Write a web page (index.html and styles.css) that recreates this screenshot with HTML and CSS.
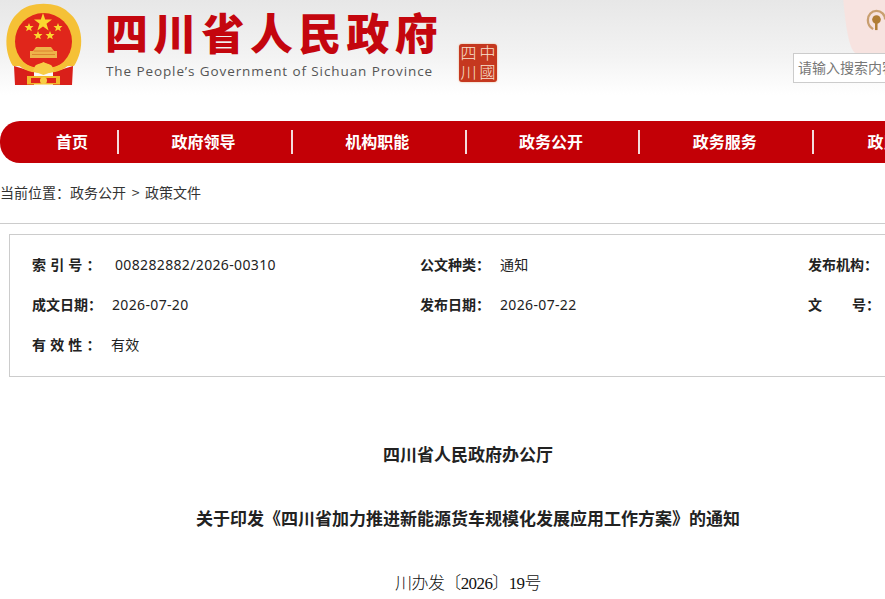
FILE: index.html
```html
<!DOCTYPE html>
<html lang="zh-CN">
    <head>
        <meta charset="utf-8">
        <title>四川省人民政府办公厅</title>
        <link rel="stylesheet" href="styles.css">
    </head>
    <body>
        <div class="page">
            <header class="top">
                <svg class="emblem" viewBox="0 0 90 90" aria-hidden="true">
                    <path d="M13 66C3 50 4 24 19 12C29 1 58 1 68 12C84 24 85 50 74 66Z" fill="#f5c136"/>
                    <circle cx="43.500" cy="41.500" r="28.500" fill="#e0261b"/>
                    <polygon points="43,13 45.200,19.600 52,19.600 46.500,23.700 48.600,30.500 43,26.400 37.400,30.500 39.500,23.700 34,19.600 40.800,19.600" fill="#fbd72f"/>
                    <polygon points="29,23 30.200,25.900 33.500,26.100 31,28.200 31.800,31.300 29,29.600 26.200,31.300 27,28.200 24.500,26.100 27.800,25.900" fill="#fbd72f"/>
                    <polygon points="58,23 59.200,25.900 62.500,26.100 60,28.200 60.800,31.300 58,29.600 55.200,31.300 56,28.200 53.500,26.100 56.800,25.900" fill="#fbd72f"/>
                    <polygon points="38,31 39.200,33.900 42.500,34.100 40,36.200 40.800,39.300 38,37.600 35.200,39.300 36,36.200 33.500,34.100 36.800,33.900" fill="#fbd72f"/>
                    <polygon points="50,31 51.200,33.900 54.500,34.100 52,36.200 52.800,39.300 50,37.600 47.200,39.300 48,36.200 45.500,34.100 48.800,33.900" fill="#fbd72f"/>
                    <path d="M36 47H51L54 51H57V58H30V51H33Z" fill="#eeb24a"/>
                    <path d="M34 51H53M32 54.500H55" stroke="#d8782a" stroke-width=".8"/>
                    <path d="M14 66L34 72V85H15ZM73 66L53 72V85H72Z" fill="#d91f1a"/>
                    <path d="M18 57C24 65 33 68 43.500 68C54 68 63 65 69 57L72 62C64 71 54 73 43.500 73C33 73 23 71 15 62Z" fill="#f5bf35"/>
                    <path d="M35 66C38 63 41 64 43.500 62C46 64 49 63 52 66L54 71L43.500 75L33 71Z" fill="#f7cd46"/>
                    <path d="M27 76H60V84.500H27Z" fill="#f2b92c"/>
                    <path d="M31 78H56V83H31Z" fill="#e0261b"/>
                    <circle cx="43.500" cy="80.500" r="3.500" fill="#f7cd46"/>
                </svg>
                <div class="site-name">
                    <div class="site-name-cn">四川省人民政府</div>
                    <div class="site-name-en">The People’s Government of Sichuan Province</div>
                </div>
                <div class="seal">
                    <span>四</span><span>中</span><span>川</span><span>國</span>
                </div>
                <div class="top-side">
                    <svg class="pin" viewBox="0 0 20 24" aria-hidden="true">
                        <path d="M7 21C3.500 19 1.500 15.500 1.500 11.500C1.500 6 5.500 2 10.500 2C15.500 2 19.500 6 19.500 11" fill="none" stroke="#c99f70" stroke-width="2.400"/>
                        <circle cx="10.500" cy="11" r="4.500" fill="#b07d35"/>
                        <rect x="9" y="12" width="2.600" height="10" fill="#b07d35"/>
                    </svg>
                    <input class="search" type="text" placeholder="请输入搜索内容">
                </div>
            </header>

            <nav class="nav">
                <a class="nav-item nav-item-first">首页</a>
                <a class="nav-item">政府领导</a>
                <a class="nav-item">机构职能</a>
                <a class="nav-item">政务公开</a>
                <a class="nav-item">政务服务</a>
                <a class="nav-item">政民互动</a>
            </nav>

            <div class="crumb">当前位置：政务公开 &gt; 政策文件</div>

            <section class="info">
                <div class="info-cell"><b class="info-label info-label-wide">索 引 号 ：</b><span class="info-value info-value-index">008282882/2026-00310</span></div>
                <div class="info-cell"><b class="info-label">公文种类：</b><span class="info-value">通知</span></div>
                <div class="info-cell"><b class="info-label">发布机构：</b></div>
                <div class="info-cell"><b class="info-label">成文日期：</b><span class="info-value">2026-07-20</span></div>
                <div class="info-cell"><b class="info-label">发布日期：</b><span class="info-value">2026-07-22</span></div>
                <div class="info-cell"><b class="info-label info-label-split"><i>文</i><i>号：</i></b></div>
                <div class="info-cell"><b class="info-label info-label-wide">有 效 性 ：</b><span class="info-value info-value-short">有效</span></div>
            </section>

            <article class="doc">
                <h2 class="doc-line doc-title">四川省人民政府办公厅</h2>
                <h1 class="doc-line doc-title">关于印发《四川省加力推进新能源货车规模化发展应用工作方案》的通知</h1>
                <p class="doc-line doc-number">川办发〔2026〕19号</p>
            </article>
        </div>
    </body>
</html>
```

FILE: styles.css
```css
html, body {
    margin: 0;
    height: 599px;
    overflow: hidden;
    background: #fff;
}
body {
    font-family: "Noto Sans CJK SC", "Noto Sans", sans-serif;
    color: #222;
}
.page {
    width: 1100px;
}

/* header */
.top {
    position: relative;
    display: flex;
    height: 95px;
    margin-bottom: 26px;
    background: linear-gradient(#e7e7e7, #f3f3f3 60%, #fff);
}
.emblem {
    width: 90px;
    height: 90px;
    flex: none;
}
.site-name {
    margin-left: 15px;
    padding-top: 10px;
    width: 345px;
    flex: none;
}
.site-name-cn {
    height: 50px;
    font-family: "Liberation Sans", "Noto Sans CJK SC", sans-serif;
    font-size: 43px;
    line-height: 50px;
    font-weight: 900;
    letter-spacing: 5.300px;
    color: #c4060e;
    white-space: nowrap;
}
.site-name-en {
    margin-top: 1px;
    padding-left: 1px;
    font-family: "Open Sans", sans-serif;
    font-size: 13.500px;
    line-height: 20px;
    letter-spacing: .9px;
    color: #555;
    white-space: nowrap;
}
.seal {
    display: grid;
    grid-template-columns: 19px 19px;
    grid-template-rows: 19px 19px;
    align-self: flex-start;
    margin-top: 44px;
    margin-left: 9px;
    flex: none;
    background: #c5381f;
    border-radius: 3px;
    box-shadow: 0 0 2px #e9a77c;
    font-family: "Liberation Sans", "Noto Sans CJK SC", sans-serif;
    font-size: 16px;
    font-weight: 300;
    line-height: 19px;
    text-align: center;
    color: #f9e2cf;
}
.top-side {
    margin-left: 296px;
    width: 300px;
    flex: none;
}
.top-side:before {
    content: "";
    position: absolute;
    left: 841px;
    top: -60px;
    width: 200px;
    height: 113px;
    border-bottom-left-radius: 15px 113px;
    background: #f7e3e0;
}
.pin {
    position: absolute;
    left: 866px;
    top: 9px;
    width: 20px;
    height: 23px;
}
.search {
    position: relative;
    display: block;
    box-sizing: border-box;
    margin-top: 53px;
    width: 200px;
    height: 30px;
    padding: 0 4px 2px;
    border: 1px solid #ccc;
    background: #fff;
    font-family: inherit;
    font-size: 14px;
}
.search::placeholder {
    color: #777;
    opacity: 1;
}

/* nav */
.nav {
    display: flex;
    align-items: center;
    height: 42px;
    background: #c30006;
    border-radius: 20px 0 0 20px;
}
.nav-item {
    width: 173.800px;
    height: 24px;
    padding-right: 3px;
    flex: none;
    border-right: 2px solid #f3dcdc;
    box-sizing: border-box;
    font-size: 16px;
    font-weight: 700;
    line-height: 22px;
    text-align: center;
    color: #fff;
}
.nav-item-first {
    width: 119px;
    padding-left: 27px;
    padding-right: 0;
}
.nav-item:last-child {
    border-right: 0;
}

/* breadcrumb */
.crumb {
    height: 61px;
    border-bottom: 1px solid #ccc;
    box-sizing: border-box;
    font-size: 14px;
    line-height: 59px;
    color: #333;
    word-spacing: 2.500px;
}

/* info table */
.info {
    display: grid;
    grid-template-columns: 388px 388px 300px;
    grid-auto-rows: 40px;
    align-items: center;
    box-sizing: border-box;
    width: 1080px;
    height: 143px;
    margin: 10px 0 0 9px;
    padding: 9px 0 0 22px;
    border: 1px solid #ccc;
}
.info-cell {
    display: flex;
    align-items: center;
    font-size: 14px;
    line-height: 20px;
}
.info-label {
    width: 80px;
    flex: none;
    font-weight: 700;
    white-space: pre;
}
.info-label-wide {
    letter-spacing: .5px;
}
.info-label-split {
    display: flex;
    justify-content: space-between;
    width: 72px;
}
.info-label-split i {
    font-style: normal;
}
.info-value {
    padding-top: 1px;
    font-family: "Noto Sans", "Noto Sans CJK SC", sans-serif;
    letter-spacing: .35px;
    white-space: nowrap;
}
.info-value-index {
    margin-left: 3px;
}
.info-value-short {
    margin-left: -1px;
}

/* document heading */
.doc {
    width: 936px;
    padding-top: 61px;
    text-align: center;
}
.doc-line {
    margin: 0;
    height: 64px;
    font-size: 17px;
    line-height: 32px;
    color: #222;
}
.doc-title {
    font-weight: 700;
}
.doc-number {
    font-family: "Liberation Serif", "Noto Sans CJK SC", serif;
    font-weight: 300;
    line-height: 36px;
    letter-spacing: -.6px;
    color: #111;
}
```
